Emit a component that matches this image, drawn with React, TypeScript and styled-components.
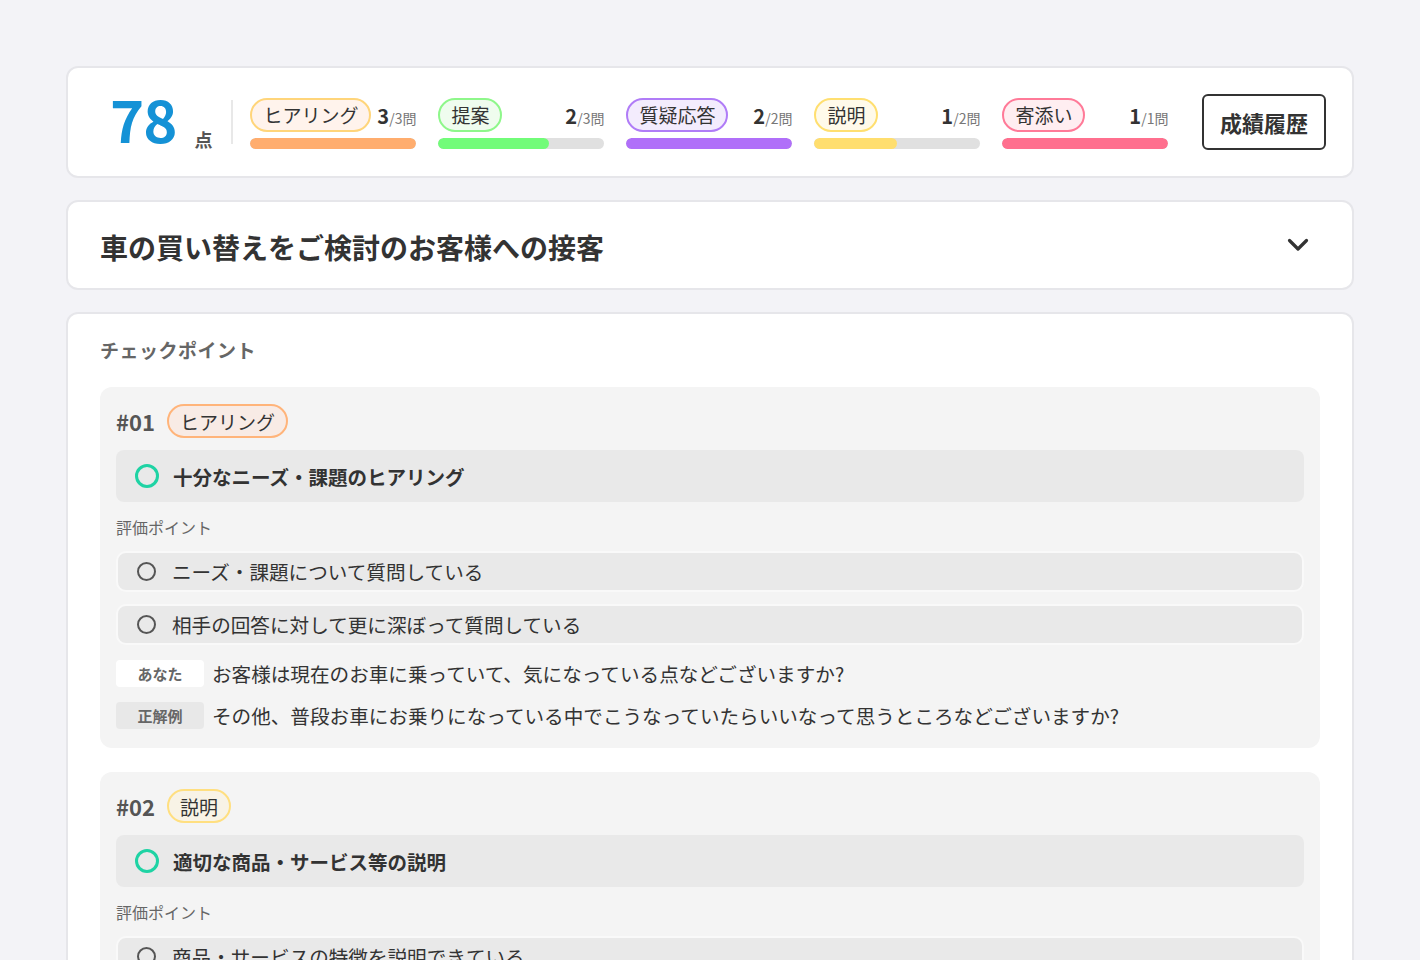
import React from 'react';
import styled, { createGlobalStyle } from 'styled-components';

const GlobalStyle = createGlobalStyle`
  * { box-sizing: border-box; }
  body {
    margin: 0;
    background: #f3f3f7;
    font-family: "Noto Sans CJK JP", "Noto Sans", sans-serif;
    color: #333333;
  }
`;

type Category = {
  label: string;
  score: number;
  total: number;
  border: string;
  bg: string;
  bar: string;
};

const categories: Category[] = [
  { label: 'ヒアリング', score: 3, total: 3, border: '#ffd57a', bg: '#fff3ec', bar: '#ffad6e' },
  { label: '提案', score: 2, total: 3, border: '#8ef78a', bg: '#effcee', bar: '#72fc79' },
  { label: '質疑応答', score: 2, total: 2, border: '#b07cf7', bg: '#f3ecfd', bar: '#b06ff9' },
  { label: '説明', score: 1, total: 2, border: '#ffdf70', bg: '#fffaea', bar: '#ffde6e' },
  { label: '寄添い', score: 1, total: 1, border: '#ff7a98', bg: '#ffeef1', bar: '#ff6f8e' },
];

const Page = styled.div`
  width: 1288px;
  margin: 0 auto;
  padding: 66px 0 40px;
  display: flex;
  flex-direction: column;
  gap: 22px;
`;

const Card = styled.div`
  background: #ffffff;
  border: 2px solid #e6e6ea;
  border-radius: 12px;
`;

const ScoreCard = styled(Card)`
  height: 112px;
  display: flex;
  align-items: center;
  padding: 0 26px 0 42px;
`;

const ScoreBox = styled.div`
  display: flex;
  align-items: flex-end;
  gap: 18px;
  padding-right: 19px;
  border-right: 2px solid #e8e8e8;
  height: 44px;
  margin-right: 17px;
`;

const ScoreValue = styled.div`
  font-size: 58px;
  font-weight: 700;
  color: #1592d6;
  line-height: 1;
  margin-bottom: -3px;
  letter-spacing: -1px;
`;

const ScoreUnit = styled.div`
  font-size: 18px;
  font-weight: 700;
  color: #555555;
  line-height: 1;
  margin-bottom: -4px;
`;

const Categories = styled.div`
  display: flex;
  gap: 22px;
  flex: 1;
`;

const CatCol = styled.div`
  width: 166px;
  display: flex;
  flex-direction: column;
  gap: 6px;
  padding-top: 2px;
`;

const CatHead = styled.div`
  display: flex;
  align-items: center;
  justify-content: space-between;
`;

const Pill = styled.span<{ $border: string; $bg: string }>`
  display: inline-flex;
  align-items: center;
  height: 34px;
  padding: 0 11px;
  border: 2px solid ${(p) => p.$border};
  background: ${(p) => p.$bg};
  border-radius: 17px;
  font-size: 19px;
  color: #333333;
  white-space: nowrap;
`;

const Count = styled.span`
  font-size: 20px;
  font-weight: 700;
  color: #333333;
  padding-top: 2px;
  small {
    font-size: 14px;
    font-weight: 400;
    color: #777777;
  }
`;

const Track = styled.div`
  height: 11px;
  border-radius: 6px;
  background: #e0e0e0;
  overflow: hidden;
`;

const Fill = styled.div<{ $color: string }>`
  height: 100%;
  border-radius: 6px;
  background: ${(p) => p.$color};
`;

const HistoryButton = styled.button`
  margin-left: auto;
  width: 124px;
  height: 56px;
  border: 2px solid #333333;
  border-radius: 6px;
  background: #ffffff;
  font-family: inherit;
  font-size: 22px;
  font-weight: 700;
  color: #333333;
  cursor: pointer;
`;

const TitleCard = styled(Card)`
  height: 90px;
  display: flex;
  align-items: center;
  justify-content: space-between;
  padding: 0 42px 0 32px;
`;

const Title = styled.h1`
  margin: 0;
  font-size: 28px;
  font-weight: 700;
  color: #333333;
  padding-top: 3px;
`;

const CheckCard = styled(Card)`
  padding: 22px 32px 40px;
  border-bottom: none;
  border-radius: 12px 12px 0 0;
`;

const SectionTitle = styled.h2`
  margin: 0 0 24px;
  font-size: 19px;
  font-weight: 700;
  color: #666666;
  letter-spacing: 0.5px;
`;

const Items = styled.div`
  display: flex;
  flex-direction: column;
  gap: 24px;
`;

const Item = styled.div`
  background: #f4f4f4;
  border-radius: 12px;
  padding: 17px 16px 18px;
  display: flex;
  flex-direction: column;
`;

const ItemHead = styled.div`
  display: flex;
  align-items: center;
  gap: 12px;
  margin-bottom: 12px;
`;

const ItemNo = styled.span`
  font-size: 22px;
  font-weight: 700;
  color: #555555;
`;

const MainRow = styled.div`
  height: 52px;
  border-radius: 8px;
  background: #e9e9e9;
  display: flex;
  align-items: center;
  gap: 14px;
  padding: 0 19px;
  font-size: 19.5px;
  font-weight: 700;
  color: #333333;
`;

const Ring = styled.span<{ $color: string; $size: number; $w: number }>`
  display: inline-block;
  width: ${(p) => p.$size}px;
  height: ${(p) => p.$size}px;
  border-radius: 50%;
  border: ${(p) => p.$w}px solid ${(p) => p.$color};
  flex-shrink: 0;
`;

const SubLabel = styled.div`
  font-size: 16px;
  color: #666666;
  margin: 13px 0 12px;
`;

const SubRows = styled.div`
  display: flex;
  flex-direction: column;
  gap: 12px;
`;

const SubRow = styled.div`
  height: 41px;
  border-radius: 10px;
  background: #e9e9e9;
  border: 2px solid #f9f9f9;
  display: flex;
  align-items: center;
  gap: 16px;
  padding: 0 19px;
  font-size: 19.6px;
  color: #333333;
`;

const Lines = styled.div`
  display: flex;
  flex-direction: column;
  gap: 13px;
  margin-top: 14px;
`;

const Line = styled.div`
  display: flex;
  align-items: center;
  gap: 8px;
  font-size: 19.6px;
  color: #333333;
`;

const Speaker = styled.span<{ $bg: string }>`
  width: 88px;
  height: 27px;
  border-radius: 4px;
  background: ${(p) => p.$bg};
  display: inline-flex;
  align-items: center;
  justify-content: center;
  font-size: 15px;
  font-weight: 700;
  color: #666666;
  flex-shrink: 0;
`;

const Chevron = () => (
  <svg width="24" height="16" viewBox="0 0 24 16" fill="none">
    <path d="M3.5 3.5l8.5 8.5 8.5-8.5" stroke="#333" strokeWidth="3.2" strokeLinecap="round" strokeLinejoin="round" />
  </svg>
);

type CheckItem = {
  no: string;
  cat: Category;
  tagBorder: string;
  tagBg: string;
  main: string;
  points: string[];
  you?: string;
  answer?: string;
};

const items: CheckItem[] = [
  {
    no: '#01',
    cat: categories[0],
    tagBorder: '#ffb47a',
    tagBg: '#f8ebe5',
    main: '十分なニーズ・課題のヒアリング',
    points: ['ニーズ・課題について質問している', '相手の回答に対して更に深ぼって質問している'],
    you: 'お客様は現在のお車に乗っていて、気になっている点などございますか?',
    answer: 'その他、普段お車にお乗りになっている中でこうなっていたらいいなって思うところなどございますか?',
  },
  {
    no: '#02',
    cat: categories[3],
    tagBorder: '#ffdf80',
    tagBg: '#f8f3e6',
    main: '適切な商品・サービス等の説明',
    points: ['商品・サービスの特徴を説明できている', '顧客のニーズに合わせて説明している'],
  },
];

const App = () => {
  return (
    <>
      <GlobalStyle />
      <Page>
        <ScoreCard>
          <ScoreBox>
            <ScoreValue>78</ScoreValue>
            <ScoreUnit>点</ScoreUnit>
          </ScoreBox>
          <Categories>
            {categories.map((c) => (
              <CatCol key={c.label}>
                <CatHead>
                  <Pill $border={c.border} $bg={c.bg}>{c.label}</Pill>
                  <Count>
                    {c.score}
                    <small>/{c.total}問</small>
                  </Count>
                </CatHead>
                <Track>
                  <Fill $color={c.bar} style={{ width: `${(c.score / c.total) * 100}%` }} />
                </Track>
              </CatCol>
            ))}
          </Categories>
          <HistoryButton>成績履歴</HistoryButton>
        </ScoreCard>

        <TitleCard>
          <Title>車の買い替えをご検討のお客様への接客</Title>
          <Chevron />
        </TitleCard>

        <CheckCard>
          <SectionTitle>チェックポイント</SectionTitle>
          <Items>
            {items.map((it) => (
              <Item key={it.no}>
                <ItemHead>
                  <ItemNo>{it.no}</ItemNo>
                  <Pill $border={it.tagBorder} $bg={it.tagBg}>{it.cat.label}</Pill>
                </ItemHead>
                <MainRow>
                  <Ring $color="#1fd3a4" $size={24} $w={3} />
                  {it.main}
                </MainRow>
                <SubLabel>評価ポイント</SubLabel>
                <SubRows>
                  {it.points.map((p) => (
                    <SubRow key={p}>
                      <Ring $color="#555" $size={19} $w={2} />
                      {p}
                    </SubRow>
                  ))}
                </SubRows>
                {it.you && (
                  <Lines>
                    <Line>
                      <Speaker $bg="#ffffff">あなた</Speaker>
                      {it.you}
                    </Line>
                    <Line>
                      <Speaker $bg="#e8e8e8">正解例</Speaker>
                      {it.answer}
                    </Line>
                  </Lines>
                )}
              </Item>
            ))}
          </Items>
        </CheckCard>
      </Page>
    </>
  );
};

export default App;
